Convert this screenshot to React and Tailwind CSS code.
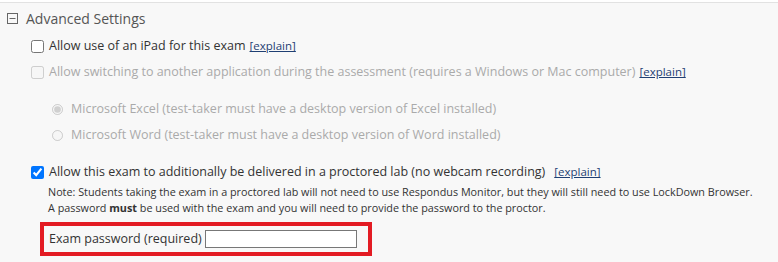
import { useState } from 'react';

const Explain = ({ className = '' }) => (
    <a href="#" className={`text-[11.5px] text-[#1f3f73] underline ${className}`}>[explain]</a>
);

const App = () => {
    const [ipad, setIpad] = useState(false);
    const [lab, setLab] = useState(true);
    const [password, setPassword] = useState('');

    return (
        <div className="w-[778px] h-[262px] bg-white pt-[2px]" style={{ fontFamily: '"Open Sans", sans-serif' }}>
            <div className="h-[260px] bg-[#f8f8f8] border-t border-[#e2e2e2] text-[#333]">
                <div className="flex items-center h-[30px] pl-[7px]">
                    <svg width="11" height="11" viewBox="0 0 11 11" className="mr-[8px]">
                        <rect x="0.5" y="0.5" width="10" height="10" fill="none" stroke="#666" />
                        <line x1="2.5" y1="5.5" x2="8.5" y2="5.5" stroke="#666" />
                    </svg>
                    <span className="text-[14px] text-[#555]">Advanced Settings</span>
                </div>

                <div className="pl-[31px]">
                    <label className="flex items-center h-[26px] text-[12.5px]">
                        <input
                            type="checkbox"
                            checked={ipad}
                            onChange={(e) => setIpad(e.target.checked)}
                            className="w-[13px] h-[13px] m-0 mr-[5px]"
                        />
                        <span>Allow use of an iPad for this exam</span>
                        <Explain className="ml-[4px]" />
                    </label>

                    <label className="flex items-center h-[26px] text-[12.5px] text-[#aaa]">
                        <input type="checkbox" disabled className="w-[13px] h-[13px] m-0 mr-[5px]" />
                        <span>Allow switching to another application during the assessment (requires a Windows or Mac computer)</span>
                        <Explain className="ml-[4px]" />
                    </label>

                    <div className="pl-[21px] pt-[11px] text-[12.5px] text-[#aaa]">
                        <label className="flex items-center h-[26px]">
                            <input type="radio" name="app" defaultChecked disabled className="w-[11px] h-[11px] m-0 mr-[8px]" />
                            <span>Microsoft Excel (test-taker must have a desktop version of Excel installed)</span>
                        </label>
                        <label className="flex items-center h-[26px]">
                            <input type="radio" name="app" disabled className="w-[11px] h-[11px] m-0 mr-[8px]" />
                            <span>Microsoft Word (test-taker must have a desktop version of Word installed)</span>
                        </label>
                    </div>

                    <label className="flex items-center h-[26px] mt-[11px] text-[12.5px]">
                        <input
                            type="checkbox"
                            checked={lab}
                            onChange={(e) => setLab(e.target.checked)}
                            className="w-[13px] h-[13px] m-0 mr-[5px]"
                        />
                        <span>Allow this exam to additionally be delivered in a proctored lab (no webcam recording)</span>
                        <Explain className="ml-[9px]" />
                    </label>

                    <div className="pl-[17px] mt-[-1px] text-[10.8px] leading-[16px] whitespace-nowrap">
                        <p>Note: Students taking the exam in a proctored lab will not need to use Respondus Monitor, but they will still need to use LockDown Browser.</p>
                        <p>A password <b>must</b> be used with the exam and you will need to provide the password to the proctor.</p>
                    </div>

                    <div className="ml-[9px] mt-[6px] w-[332px] h-[34px] border-4 border-[#e31b23] flex items-center pl-[5px] text-[12.5px]">
                        <span className="mr-[3px]">Exam password (required)</span>
                        <input
                            type="text"
                            value={password}
                            onChange={(e) => setPassword(e.target.value)}
                            className="w-[152px] h-[18px] bg-white border border-[#777] outline-none"
                        />
                    </div>
                </div>
            </div>
        </div>
    );
};

export default App;
